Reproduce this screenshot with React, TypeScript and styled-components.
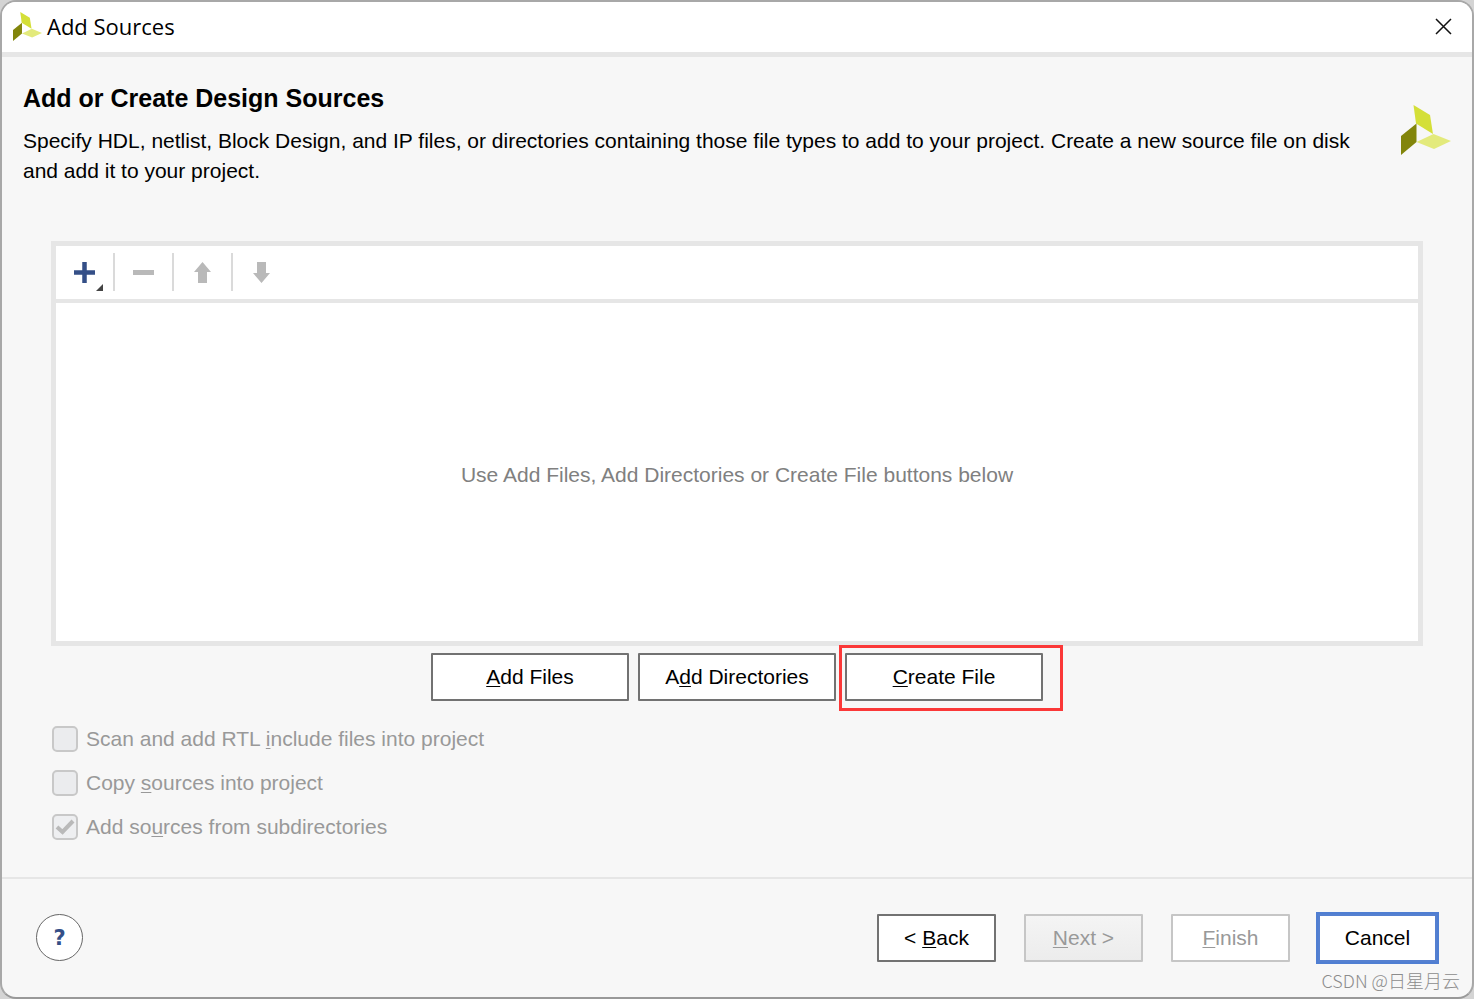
import React from "react";
import styled, { createGlobalStyle, css } from "styled-components";

const GlobalStyle = createGlobalStyle`
  *, *::before, *::after { box-sizing: border-box; }
  body {
    margin: 0;
    background: #d4d4d4;
    color: #000;
    font: 21px/30px "Liberation Sans", Arial, sans-serif;
  }
  button, input { font: inherit; color: inherit; }
  h1, h2, p { margin: 0; }
`;

const Dialog = styled.main`
  position: relative;
  display: flex;
  flex-direction: column;
  min-height: 100vh;
  border: 2px solid #a8a8a8;
  border-bottom-color: #999;
  border-radius: 16px;
  background: #f7f7f7;
  overflow: hidden;
`;

const TitleBar = styled.header`
  display: flex;
  align-items: center;
  gap: 5px;
  height: 55px;
  padding: 0 18px 2px 11px;
  border-bottom: 5px solid #e6e6e6;
  background: #fff;
`;

const WindowTitle = styled.h1`
  flex: 1;
  font: 400 22px/30px "Open Sans", "Noto Sans", sans-serif;
`;

const CloseButton = styled.button`
  display: flex;
  padding: 0;
  border: 0;
  background: none;
`;

const Intro = styled.section`
  display: flex;
  justify-content: space-between;
  gap: 20px;
  padding: 26px 21px 0 21px;
`;

const Heading = styled.h2`
  font-size: 25px;
  line-height: 30px;
  margin-bottom: 13px;
`;

const Description = styled.p``;

const IntroText = styled.div`
  flex: 1;
`;

const IntroLogo = styled.div`
  padding-top: 22px;
`;

const Content = styled.section`
  display: flex;
  flex: 1;
  flex-direction: column;
  padding: 55px 49px 35px;
`;

const Panel = styled.div`
  display: flex;
  flex: 1;
  flex-direction: column;
  border: 5px solid #e6e6e6;
  background: #fff;
`;

const Toolbar = styled.div`
  display: flex;
  align-items: center;
  height: 57px;
  padding-bottom: 2px;
  border-bottom: 4px solid #e6e6e6;
`;

const ToolButton = styled.button`
  display: flex;
  align-items: center;
  justify-content: center;
  width: 59px;
  height: 38px;
  padding: 0;
  border: 0;
  border-right: 2px solid #dadada;
  background: none;
  &:last-child { border-right-color: transparent; }
`;

const EmptyState = styled.div`
  display: flex;
  flex: 1;
  align-items: center;
  justify-content: center;
  padding-top: 5px;
  color: #808080;
`;

const ActionRow = styled.div`
  display: flex;
  justify-content: center;
  gap: 9px;
  padding-top: 7px;
`;

const tones = {
  normal: css`border: 2px solid #727272; background: #fff; color: #000;`,
  shaded: css`border: 2px solid #c6c6c6; background: linear-gradient(#f4f4f4, #ececec); color: #999;`,
  muted: css`border: 2px solid #c6c6c6; background: #fff; color: #999;`,
  focused: css`border: 2px solid #5580d0; border-radius: 0; background: #fff; color: #000; box-shadow: 0 0 0 2px #4f7ed2;`,
};

const PushButton = styled.button<{ $width: number; $tone?: keyof typeof tones }>`
  width: ${(p) => p.$width}px;
  height: 48px;
  padding: 0;
  border-radius: 1px;
  ${(p) => tones[p.$tone ?? "normal"]}
`;

const Highlighted = styled.div`
  position: relative;
  &::after {
    content: "";
    position: absolute;
    inset: -8px -20px -10px -6px;
    border: 3px solid #fb3838;
    pointer-events: none;
  }
`;

const Options = styled.div`
  display: flex;
  flex-direction: column;
  gap: 14px;
  padding: 23px 0 0 1px;
`;

const OptionLabel = styled.label`
  display: flex;
  align-items: center;
  gap: 8px;
  color: #999;
`;

const CheckBox = styled.input`
  appearance: none;
  width: 26px;
  height: 26px;
  margin: 0;
  border: 2px solid #c8c8c8;
  border-radius: 5px;
  background: #ebecee;
  &:checked {
    background: #eeeff1 url("data:image/svg+xml,%3Csvg xmlns='http://www.w3.org/2000/svg' viewBox='0 0 22 22'%3E%3Cpath d='M3 11 8.500 16 19 5' fill='none' stroke='%23b9b9b9' stroke-width='4'/%3E%3C/svg%3E") center / 22px 22px no-repeat;
  }
`;

const Mnemonic = styled.span`
  text-decoration: underline;
  text-decoration-thickness: 1px;
  text-underline-offset: 2px;
  text-decoration-skip-ink: none;
`;

const Footer = styled.footer`
  display: flex;
  align-items: flex-start;
  gap: 28px;
  height: 120px;
  padding: 35px 35px 0 34px;
  border-top: 2px solid #e6e6e6;
`;

const HelpButton = styled.button`
  display: flex;
  align-items: center;
  justify-content: center;
  width: 47px;
  height: 47px;
  margin-right: auto;
  padding: 0;
  border: 1px solid #666;
  border-radius: 50%;
  background: #fff;
  color: #344f87;
  font: 700 21px/30px "DejaVu Sans", sans-serif;
`;

const Watermark = styled.span`
  position: absolute;
  right: 12px;
  bottom: 5px;
  color: #8c8c8c;
  font: 300 18px/24px "Noto Sans CJK SC", sans-serif;
`;

function Logo({ size }: { size: number }) {
  return (
    <svg width={size} height={size} viewBox="0 0 50 50" aria-hidden="true">
      <path d="M12.500 0 29 10 32 29 15 18.500Z" fill="#d4df38" />
      <path d="M0 31 15.500 18.500V37L0 50Z" fill="#82850b" />
      <path d="M15.500 37 32.500 29 50 36 33 44Z" fill="#e3ea7c" />
    </svg>
  );
}

export default function App() {
  return (
    <>
      <GlobalStyle />
      <Dialog>
        <TitleBar>
          <Logo size={29} />
          <WindowTitle>Add Sources</WindowTitle>
          <CloseButton aria-label="Close">
            <svg width="21" height="21" viewBox="0 0 21 21">
              <path d="M3 3 18 18M18 3 3 18" stroke="#111" strokeWidth="1.500" />
            </svg>
          </CloseButton>
        </TitleBar>
        <Intro>
          <IntroText>
            <Heading>Add or Create Design Sources</Heading>
            <Description>
              Specify HDL, netlist, Block Design, and IP files, or directories containing those file types to add to
              your project. Create a new source file on disk and add it to your project.
            </Description>
          </IntroText>
          <IntroLogo>
            <Logo size={50} />
          </IntroLogo>
        </Intro>
        <Content>
          <Panel>
            <Toolbar>
              <ToolButton aria-label="Add">
                <svg width="38" height="38" viewBox="0 0 38 38">
                  <path d="M18.500 9V30M8 19.500H29" stroke="#344f87" strokeWidth="4.500" />
                  <path d="M37 31V38H30Z" fill="#444" />
                </svg>
              </ToolButton>
              <ToolButton aria-label="Remove" disabled>
                <svg width="38" height="38" viewBox="0 0 38 38">
                  <path d="M8 19.500H29" stroke="#b9b9b9" strokeWidth="5" />
                </svg>
              </ToolButton>
              <ToolButton aria-label="Move up" disabled>
                <svg width="38" height="38" viewBox="0 0 38 38">
                  <path d="M18.500 9 27 19H23V30H14V19H10Z" fill="#b9b9b9" />
                </svg>
              </ToolButton>
              <ToolButton aria-label="Move down" disabled>
                <svg width="38" height="38" viewBox="0 0 38 38">
                  <path d="M18.500 30 27 20H23V9H14V20H10Z" fill="#b9b9b9" />
                </svg>
              </ToolButton>
            </Toolbar>
            <EmptyState>Use Add Files, Add Directories or Create File buttons below</EmptyState>
          </Panel>
          <ActionRow>
            <PushButton $width={198}><Mnemonic>A</Mnemonic>dd Files</PushButton>
            <PushButton $width={198}>A<Mnemonic>d</Mnemonic>d Directories</PushButton>
            <Highlighted>
              <PushButton $width={198}><Mnemonic>C</Mnemonic>reate File</PushButton>
            </Highlighted>
          </ActionRow>
          <Options>
            <OptionLabel>
              <CheckBox type="checkbox" disabled />
              <span>Scan and add RTL <Mnemonic>i</Mnemonic>nclude files into project</span>
            </OptionLabel>
            <OptionLabel>
              <CheckBox type="checkbox" disabled />
              <span>Copy <Mnemonic>s</Mnemonic>ources into project</span>
            </OptionLabel>
            <OptionLabel>
              <CheckBox type="checkbox" disabled defaultChecked />
              <span>Add so<Mnemonic>u</Mnemonic>rces from subdirectories</span>
            </OptionLabel>
          </Options>
        </Content>
        <Footer>
          <HelpButton aria-label="Help">?</HelpButton>
          <PushButton $width={119}>&lt; <Mnemonic>B</Mnemonic>ack</PushButton>
          <PushButton $width={119} $tone="shaded" disabled><Mnemonic>N</Mnemonic>ext &gt;</PushButton>
          <PushButton $width={119} $tone="muted" disabled><Mnemonic>F</Mnemonic>inish</PushButton>
          <PushButton $width={119} $tone="focused">Cancel</PushButton>
        </Footer>
        <Watermark>CSDN @日星月云</Watermark>
      </Dialog>
    </>
  );
}
